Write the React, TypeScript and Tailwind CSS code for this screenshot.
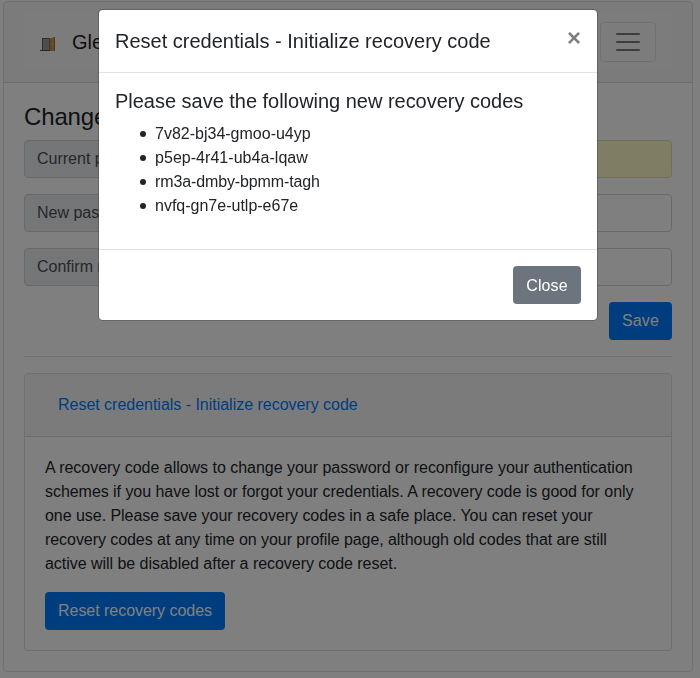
import type { ReactNode } from "react";

const codes = [
  { value: "7v82-bj34-gmoo-u4yp", tracking: "tracking-normal" },
  { value: "p5ep-4r41-ub4a-lqaw", tracking: "tracking-[0.04px]" },
  { value: "rm3a-dmby-bpmm-tagh", tracking: "tracking-[-0.12px]" },
  { value: "nvfq-gn7e-utlp-e67e", tracking: "tracking-normal" },
];

function DoorLogo() {
  return (
    <svg width="16" height="18" viewBox="0 0 16 18" shapeRendering="crispEdges">
      <rect x="2" y="5" width="8" height="12" fill="#5c5c5c" />
      <rect x="3" y="6" width="6" height="11" fill="#9c9c9c" />
      <rect x="0" y="17" width="13" height="1" fill="#4c4c4c" />
      <rect x="9" y="5" width="1" height="12" fill="#86694a" />
      <rect x="10" y="5" width="3" height="13" fill="#c09058" />
      <rect x="13" y="4" width="1" height="14" fill="#cc9a58" />
      <rect x="14" y="4" width="1" height="14" fill="#a06c28" />
      <rect x="12" y="10" width="1" height="2" fill="#e0b85c" />
    </svg>
  );
}

function Navbar() {
  return (
    <div className="rounded-t-[3px] border-b border-black/[0.125] bg-black/[0.03] px-5 py-3">
      <nav className="flex items-center justify-between bg-[#f8f9fa] px-4 py-2">
        <div className="flex items-center gap-4 text-xl leading-[30px] text-black/90">
          <DoorLogo />
          <span>Glewlwyd</span>
        </div>
        <button className="rounded border border-black/10 px-3 py-1">
          <svg className="block" width="30" height="30" viewBox="0 0 30 30" fill="none">
            <path
              d="M4 7h22M4 15h22M4 23h22"
              stroke="rgba(0,0,0,0.5)"
              strokeWidth="2"
              strokeLinecap="round"
            />
          </svg>
        </button>
      </nav>
    </div>
  );
}

function Field({ label, highlighted }: { label: string; highlighted?: boolean }) {
  return (
    <div className="mb-4 flex h-[38px]">
      <span className="flex items-center rounded-l border border-[#ced4da] bg-[#e9ecef] px-3 whitespace-nowrap text-[#495057]">
        {label}
      </span>
      <input
        type="password"
        className={
          highlighted
            ? "-ml-px min-w-0 flex-1 rounded-r border border-[#e1dfb5] bg-[#fffdc8] px-3"
            : "-ml-px min-w-0 flex-1 rounded-r border border-[#ced4da] bg-white px-3"
        }
      />
    </div>
  );
}

function Button({ className, children }: { className: string; children: ReactNode }) {
  return (
    <button className={`block h-[38px] rounded text-center whitespace-nowrap text-white ${className}`}>
      {children}
    </button>
  );
}

function RecoveryModal() {
  return (
    <div className="fixed inset-0 bg-black/50 pt-[9px] pr-1">
      <div className="mx-auto w-[500px] rounded-[4.8px] border border-black/20 bg-white bg-clip-padding">
        <div className="flex items-start justify-between border-b border-[#dee2e6] p-4">
          <h5 className="text-xl leading-[30px]">Reset credentials - Initialize recovery code</h5>
          <button className="text-2xl leading-none font-bold text-black opacity-50">×</button>
        </div>
        <div className="p-4">
          <h5 className="mb-2 text-xl leading-6 tracking-[-0.02px]">
            Please save the following new recovery codes
          </h5>
          <ul className="mb-[15px] pt-px pl-10">
            {codes.map(({ value, tracking }) => (
              <li
                key={value}
                className={`flex items-center before:mr-[9px] before:-ml-[15px] before:size-1.5 before:rounded-full before:bg-[#212529] before:content-[''] ${tracking}`}
              >
                {value}
              </li>
            ))}
          </ul>
        </div>
        <div className="flex justify-end border-t border-[#dee2e6] p-4">
          <Button className="w-[68px] bg-[#6c757d] pt-0.5 tracking-[0.1px]">Close</Button>
        </div>
      </div>
    </div>
  );
}

export default function App() {
  return (
    <div className="h-[678px] overflow-hidden bg-white pt-px pr-[7px] pl-[3px] font-['Liberation_Sans',Arial,sans-serif] text-base leading-6 text-[#212529]">
      <main className="rounded border border-black/[0.125]">
        <Navbar />
        <div className="p-5">
          <h4 className="mb-2 text-2xl leading-[28.8px] tracking-[-0.15px]">Change password</h4>
          <Field label="Current password" highlighted />
          <Field label="New password" />
          <Field label="Confirm new password" />
          <div className="flex justify-end">
            <Button className="w-[63px] bg-[#007bff] tracking-[0.1px]">Save</Button>
          </div>
          <hr className="my-4 border-t border-black/10" />
          <section className="rounded border border-black/[0.125]">
            <div className="rounded-t-[3px] border-b border-black/[0.125] bg-black/[0.03] px-5 py-3">
              <button className="block border border-transparent px-3 py-1.5 tracking-[-0.02px] text-[#007bff]">
                Reset credentials - Initialize recovery code
              </button>
            </div>
            <div className="px-5 pt-[19px] pb-5">
              <p className="mb-4 whitespace-nowrap">
                <span className="block tracking-[-0.025px]">
                  A recovery code allows to change your password or reconfigure your authentication
                </span>
                <span className="block tracking-[-0.045px]">
                  schemes if you have lost or forgot your credentials. A recovery code is good for only
                </span>
                <span className="block tracking-[-0.04px]">
                  one use. Please save your recovery codes in a safe place. You can reset your
                </span>
                <span className="block tracking-[-0.06px]">
                  recovery codes at any time on your profile page, although old codes that are still
                </span>
                <span className="block tracking-[-0.035px]">
                  active will be disabled after a recovery code reset.
                </span>
              </p>
              <Button className="w-[180px] bg-[#007bff] tracking-[-0.04px]">
                Reset recovery codes
              </Button>
            </div>
          </section>
        </div>
      </main>
      <RecoveryModal />
    </div>
  );
}
